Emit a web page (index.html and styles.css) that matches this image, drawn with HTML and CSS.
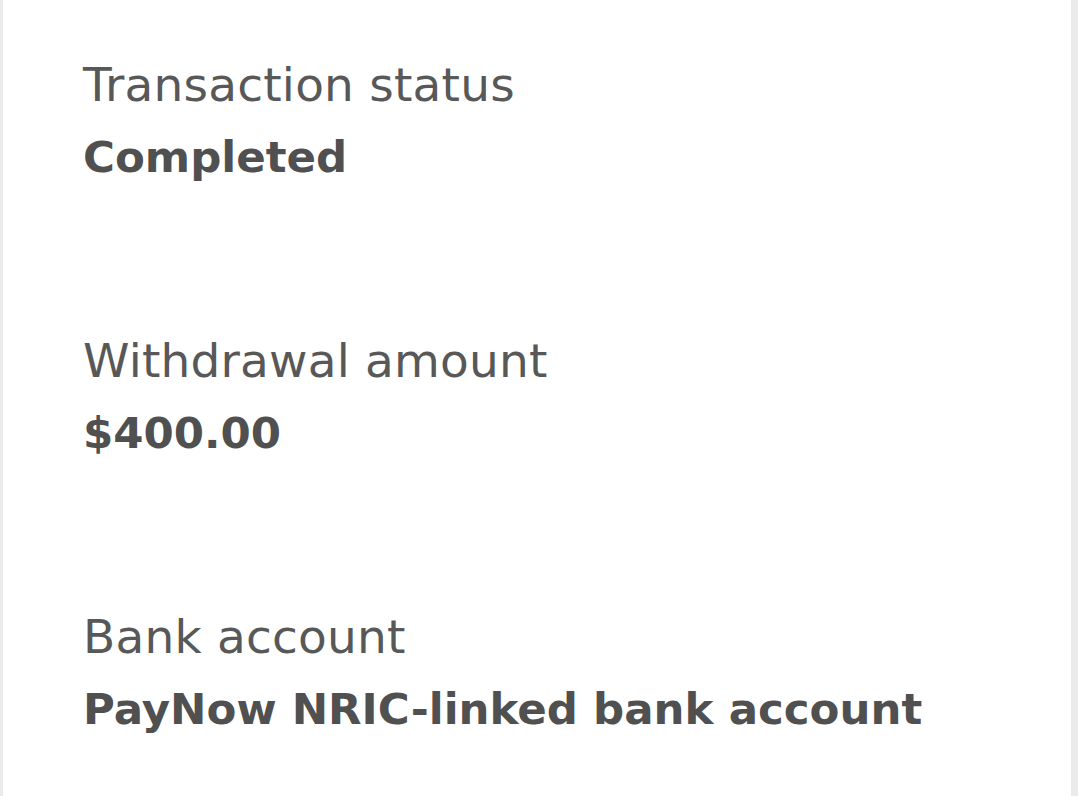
FILE: index.html
```html
<!DOCTYPE html>
<html>
<head>
<meta charset="utf-8">
<link rel="stylesheet" href="styles.css">
</head>
<body>
<main class="panel">
  <section class="item">
    <div class="label">Transaction status</div>
    <div class="value">Completed</div>
  </section>
  <section class="item">
    <div class="label">Withdrawal amount</div>
    <div class="value">$400.00</div>
  </section>
  <section class="item">
    <div class="label">Bank account</div>
    <div class="value">PayNow NRIC-linked bank account</div>
  </section>
</main>
</body>
</html>
```
FILE: styles.css
```css
html, body {
  margin: 0;
  padding: 0;
  background: #ebebeb;
}
.panel {
  box-sizing: border-box;
  height: 796px;
  margin: 0 7px 0 3px;
  background: #ffffff;
  padding: 57px 0 0 80px;
  display: flex;
  flex-direction: column;
  gap: 148px;
  font-family: "DejaVu Sans", sans-serif;
}
.item {
  display: flex;
  flex-direction: column;
  gap: 16px;
}
.label {
  font-size: 47px;
  line-height: 56px;
  letter-spacing: 0.2px;
  color: #585858;
  font-weight: 400;
}
.value {
  font-size: 43.5px;
  line-height: 56px;
  color: #505050;
  font-weight: 700;
}
```
